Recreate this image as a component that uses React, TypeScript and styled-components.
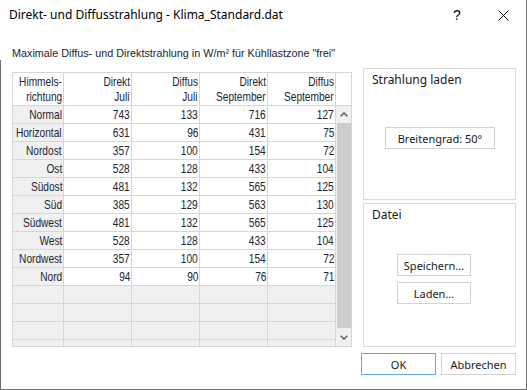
import React, { FC } from 'react'
import styled, { createGlobalStyle } from 'styled-components'

const GlobalStyle = createGlobalStyle`
  html, body {
    margin: 0;
    padding: 0;
    background: #fff;
  }
  body {
    font-family: 'Segoe UI', 'Noto Sans', sans-serif;
    color: #1a1a1a;
  }
`

const Window = styled.div`
  width: 527px;
  height: 390px;
  box-sizing: border-box;
  border-right: 1px solid #6f6f6f;
  border-bottom: 1px solid #6f6f6f;
  display: flex;
  flex-direction: column;
  background: #fff;
`

const TitleBar = styled.div`
  height: 30px;
  flex-shrink: 0;
  display: flex;
  align-items: center;
  padding-left: 9px;
  font-size: 12px;
  color: #000;
`

const Title = styled.div`
  flex: 1;
  padding-bottom: 2px;
`

const CaptionButton = styled.div`
  width: 46px;
  height: 30px;
  display: flex;
  align-items: center;
  justify-content: center;
  font-family: 'Liberation Sans', sans-serif;
  font-size: 14px;
`

const Subtitle = styled.div`
  margin: 16px 0 0 12px;
  line-height: 14px;
  font-family: 'Liberation Sans', sans-serif;
  font-size: 10.8px;
  color: #1c2533;
`

const Content = styled.div`
  flex: 1;
  display: flex;
  gap: 9px;
  padding: 8px 0 0 11px;
  border-left: 1px solid #6f6f6f;
`

const Left = styled.div`
  padding-top: 4px;
`

const Grid = styled.div`
  width: 340px;
  box-sizing: border-box;
  display: grid;
  grid-template-columns: 50px 67px 67px 67px 67px 15px;
  grid-template-rows: 32px repeat(13, 17px) 6px;
  gap: 1px;
  background: #d6d6d6;
  border: 1px solid #d6d6d6;
  font-family: 'Liberation Sans', sans-serif;
  font-size: 13px;
  color: #1c2533;
`

type CellKind = 'head' | 'label' | 'value' | 'empty'

const Cell = styled.div<{ $kind: CellKind }>`
  background: ${p => (p.$kind === 'head' || p.$kind === 'value' ? '#fff' : '#f0f0f0')};
  display: flex;
  flex-direction: column;
  align-items: flex-end;
  justify-content: center;
  padding-right: 1px;
  line-height: ${p => (p.$kind === 'head' ? '15px' : '17px')};
  white-space: nowrap;
  overflow: hidden;
`

// the grid uses a narrow face; Liberation Sans squeezed to match it
const Narrow = styled.span`
  display: inline-block;
  transform: scaleX(0.78);
  transform-origin: right center;
`

const Scrollbar = styled.div`
  grid-column: 6;
  grid-row: 2 / -1;
  background: #f0f0f0;
  display: flex;
  flex-direction: column;
`

const ArrowBox = styled.div`
  height: 17px;
  display: flex;
  align-items: center;
  justify-content: center;
`

const Thumb = styled.div`
  flex: 1;
  margin: 0 0 1px 1px;
  background: #cdcdcd;
`

const Right = styled.div`
  width: 155px;
  display: flex;
  flex-direction: column;
  gap: 3px;
`

const Group = styled.div<{ $height: number }>`
  height: ${p => p.$height}px;
  box-sizing: border-box;
  margin-left: 2px;
  border: 1px solid #dadada;
  display: flex;
  flex-direction: column;
`

const GroupTitle = styled.div`
  margin: 2px 0 0 8px;
  line-height: 17px;
  font-size: 12px;
  color: #1a1a1a;
`

const GroupBody = styled.div<{ $top: number; $left: number }>`
  display: flex;
  flex-direction: column;
  gap: 6px;
  padding: ${p => p.$top}px 0 0 ${p => p.$left}px;
`

const Button = styled.div<{ $width: number; $primary?: boolean }>`
  width: ${p => p.$width}px;
  height: 22px;
  box-sizing: border-box;
  border: 1px solid ${p => (p.$primary ? '#63addf' : '#d2d2d2')};
  background: #fff;
  display: flex;
  align-items: center;
  justify-content: center;
  font-size: 11px;
  color: #1a1a1a;
`

const Footer = styled.div`
  display: flex;
  gap: 5px;
  margin-top: 3px;
`

const rows: [string, number, number, number, number][] = [
  ['Normal', 743, 133, 716, 127],
  ['Horizontal', 631, 96, 431, 75],
  ['Nordost', 357, 100, 154, 72],
  ['Ost', 528, 128, 433, 104],
  ['Südost', 481, 132, 565, 125],
  ['Süd', 385, 129, 563, 130],
  ['Südwest', 481, 132, 565, 125],
  ['West', 528, 128, 433, 104],
  ['Nordwest', 357, 100, 154, 72],
  ['Nord', 94, 90, 76, 71],
]

const headers = [
  ['Himmels-', 'richtung'],
  ['Direkt', 'Juli'],
  ['Diffus', 'Juli'],
  ['Direkt', 'September'],
  ['Diffus', 'September'],
]

const Chevron: FC<{ up?: boolean }> = ({ up }) => (
  <svg width="8" height="5" viewBox="0 0 8 5">
    <path
      d={up ? 'M0.7 4.3 L4 1 L7.3 4.3' : 'M0.7 0.7 L4 4 L7.3 0.7'}
      fill="none"
      stroke="#606060"
      strokeWidth="1.6"
    />
  </svg>
)

const CloseIcon: FC = () => (
  <svg width="11" height="11" viewBox="0 0 11 11">
    <path d="M0.5 0.5 L10.5 10.5 M10.5 0.5 L0.5 10.5" stroke="#000" strokeWidth="1" />
  </svg>
)

const App: FC = () => {
  return (
    <Window>
      <GlobalStyle />
      <TitleBar>
        <Title>Direkt- und Diffusstrahlung - Klima_Standard.dat</Title>
        <CaptionButton>?</CaptionButton>
        <CaptionButton>
          <CloseIcon />
        </CaptionButton>
      </TitleBar>
      <Subtitle>Maximale Diffus- und Direktstrahlung in W/m² für Kühllastzone "frei"</Subtitle>
      <Content>
        <Left>
          <Grid>
            {headers.map((h, i) => (
              <Cell key={'h' + i} $kind="head">
                <Narrow>{h[0]}</Narrow>
                <Narrow>{h[1]}</Narrow>
              </Cell>
            ))}
            <Cell $kind="head" />
            <Scrollbar>
              <ArrowBox>
                <Chevron up />
              </ArrowBox>
              <Thumb />
              <ArrowBox>
                <Chevron />
              </ArrowBox>
            </Scrollbar>
            {rows.map(r =>
              r.map((v, i) => (
                <Cell key={r[0] + i} $kind={i === 0 ? 'label' : 'value'}>
                  <Narrow>{v}</Narrow>
                </Cell>
              ))
            )}
            {Array.from({ length: 20 }).map((_, i) => (
              <Cell key={'e' + i} $kind="empty" />
            ))}
          </Grid>
        </Left>
        <Right>
          <Group $height={132}>
            <GroupTitle>Strahlung laden</GroupTitle>
            <GroupBody $top={39} $left={21}>
              <Button $width={110}>Breitengrad: 50°</Button>
            </GroupBody>
          </Group>
          <Group $height={144}>
            <GroupTitle>Datei</GroupTitle>
            <GroupBody $top={31} $left={33}>
              <Button $width={74}>Speichern...</Button>
              <Button $width={74}>Laden...</Button>
            </GroupBody>
          </Group>
          <Footer>
            <Button $width={75} $primary>
              OK
            </Button>
            <Button $width={75}>Abbrechen</Button>
          </Footer>
        </Right>
      </Content>
    </Window>
  )
}

export default App
